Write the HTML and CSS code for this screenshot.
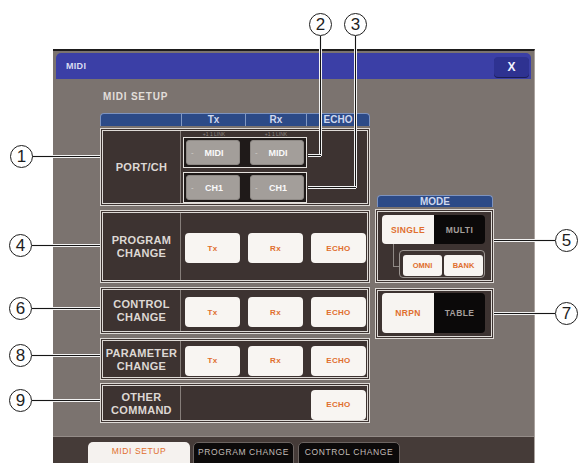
FILE: index.html
```html
<!DOCTYPE html>
<html>
<head>
<meta charset="utf-8">
<link rel="stylesheet" href="styles.css">
</head>
<body>
<div class="page">
  <div class="window">
    <div class="titlebar">
      <span class="title">MIDI</span>
      <div class="close">X</div>
    </div>
    <div class="win-body">
      <div class="section-title">MIDI SETUP</div>
      <div class="main">
        <div class="table">
          <div class="thead">
            <div class="th"></div>
            <div class="th sep">Tx</div>
            <div class="th sep">Rx</div>
            <div class="th sep">ECHO</div>
          </div>
          <div class="row row-port">
            <div class="label">PORT/CH</div>
            <div class="port-content">
              <div class="tiny-row"><span class="tiny">+1 1 LINK</span><span class="tiny">+1 1 LINK</span></div>
              <div class="gbox">
                <div class="gbtn"><span class="dash">-</span><span class="gtxt">MIDI</span></div>
                <div class="gbtn"><span class="dash">-</span><span class="gtxt">MIDI</span></div>
              </div>
              <div class="gbox">
                <div class="gbtn"><span class="dash">-</span><span class="gtxt">CH1</span></div>
                <div class="gbtn"><span class="dash">-</span><span class="gtxt">CH1</span></div>
              </div>
            </div>
          </div>
          <div class="row row-prog">
            <div class="label">PROGRAM<br>CHANGE</div>
            <div class="content">
              <div class="wbtn">Tx</div><div class="wbtn">Rx</div><div class="wbtn">ECHO</div>
            </div>
          </div>
          <div class="row row-ctrl">
            <div class="label">CONTROL<br>CHANGE</div>
            <div class="content">
              <div class="wbtn">Tx</div><div class="wbtn">Rx</div><div class="wbtn">ECHO</div>
            </div>
          </div>
          <div class="row row-param">
            <div class="label">PARAMETER<br>CHANGE</div>
            <div class="content">
              <div class="wbtn">Tx</div><div class="wbtn">Rx</div><div class="wbtn">ECHO</div>
            </div>
          </div>
          <div class="row row-other">
            <div class="label">OTHER<br>COMMAND</div>
            <div class="content content-end">
              <div class="wbtn">ECHO</div>
            </div>
          </div>
        </div>
        <div class="mode">
          <div class="mode-head">MODE</div>
          <div class="mbox mbox-1">
            <div class="toggle">
              <div class="t-on">SINGLE</div>
              <div class="t-off">MULTI</div>
            </div>
            <div class="sub-row">
              <div class="connector"></div>
              <div class="group">
                <div class="sbtn">OMNI</div>
                <div class="sbtn">BANK</div>
              </div>
            </div>
          </div>
          <div class="mbox mbox-2">
            <div class="toggle toggle-tall">
              <div class="t-on">NRPN</div>
              <div class="t-off">TABLE</div>
            </div>
          </div>
        </div>
      </div>
    </div>
    <div class="tabbar">
      <div class="tab tab-active">MIDI SETUP</div>
      <div class="tab tab-prog">PROGRAM CHANGE</div>
      <div class="tab tab-ctrl">CONTROL CHANGE</div>
    </div>
  </div>

  <div class="ln-h ln-1"></div>
  <div class="ln-h ln-4"></div>
  <div class="ln-h ln-6"></div>
  <div class="ln-h ln-8"></div>
  <div class="ln-h ln-9"></div>
  <div class="ln-h ln-5"></div>
  <div class="ln-h ln-7"></div>
  <div class="ln-v ln-2v"></div>
  <div class="ln-h ln-2h"></div>
  <div class="ln-v ln-3v"></div>
  <div class="ln-h ln-3h"></div>

  <div class="co co-1">1</div>
  <div class="co co-2">2</div>
  <div class="co co-3">3</div>
  <div class="co co-4">4</div>
  <div class="co co-5">5</div>
  <div class="co co-6">6</div>
  <div class="co co-7">7</div>
  <div class="co co-8">8</div>
  <div class="co co-9">9</div>
</div>
</body>
</html>
```
FILE: styles.css
```css
* { box-sizing: border-box; }
html, body { margin: 0; padding: 0; background: #fff; }
body { font-family: "Liberation Sans", Arial, sans-serif; }

.page {
  position: relative;
  width: 584px;
  height: 463px;
  overflow: hidden;
  padding: 49px 0 0 53px;
}

.window {
  width: 482px;
  background: #7b736f;
  border-top: 2px solid #1d1b1b;
  border-right: 1px solid #aaa39f;
}

.titlebar {
  margin: 2px 3px 0 3px;
  height: 26px;
  background: #3b3fa6;
  border-radius: 5px 5px 0 0;
  display: flex;
  align-items: center;
  justify-content: space-between;
  padding: 0 2px 0 10px;
}
.title {
  color: #d9dcf2;
  font-size: 9px;
  font-weight: bold;
  letter-spacing: 0.3px;
}
.close {
  width: 35px;
  height: 20px;
  margin-top: 2px;
  background: #2e3291;
  border-radius: 4px;
  box-shadow: 0 1px 0 #1b1d55;
  color: #f2f2ff;
  font-weight: bold;
  font-size: 12px;
  display: flex;
  align-items: center;
  justify-content: center;
}

.win-body {
  height: 357px;
  padding: 12px 0 0 47px;
}
.section-title {
  margin-left: 3px;
  font-size: 10px;
  line-height: 12px;
  height: 12px;
  font-weight: bold;
  color: #e2deda;
  letter-spacing: 0.8px;
}
.main {
  margin-top: 10px;
  display: flex;
  align-items: flex-start;
  gap: 5px;
}

.table { width: 270px; }
.thead {
  height: 13px;
  margin-bottom: 2px;
  background: #2c4a87;
  border: 1px solid #7d93bf;
  border-bottom: none;
  border-radius: 4px 4px 0 0;
  display: grid;
  grid-template-columns: 80px 64px 61px 63px;
}
.th {
  color: #cfd8ef;
  font-size: 10px;
  font-weight: bold;
  line-height: 12px;
  text-align: center;
}
.th.sep { border-left: 1px solid #8299c4; }

.row {
  width: 270px;
  border: 3px double #dedad6;
  background: #3d3331;
  display: flex;
}
.row-port { height: 78px; }
.row-prog { height: 73px; margin-top: 4px; }
.row-ctrl { height: 47px; margin-top: 4px; }
.row-param { height: 42px; margin-top: 4px; }
.row-other { height: 40px; margin-top: 3px; }

.label {
  width: 78px;
  border-right: 1px solid #867e7a;
  display: flex;
  align-items: center;
  justify-content: center;
  text-align: center;
  color: #ddd8d4;
  font-size: 11px;
  font-weight: bold;
  line-height: 13px;
  letter-spacing: 0.3px;
  padding-top: 1px;
}
.content {
  flex: 1;
  display: flex;
  align-items: center;
  gap: 8px;
  padding: 3px 0 0 4px;
}
.content-end { justify-content: flex-end; padding-right: 1px; }

.wbtn {
  width: 55px;
  height: 30px;
  background: #f8f5f2;
  border-radius: 4px;
  color: #e06f2e;
  font-size: 8px;
  font-weight: bold;
  letter-spacing: 0.3px;
  display: flex;
  align-items: center;
  justify-content: center;
}

.port-content {
  flex: 1;
  display: flex;
  flex-direction: column;
  padding: 0 0 0 2px;
}
.tiny-row {
  height: 6px;
  width: 124px;
  display: flex;
}
.tiny {
  flex: 1;
  text-align: center;
  font-size: 5px;
  line-height: 6px;
  color: #8d8581;
}
.gbox {
  width: 124px;
  height: 31px;
  border: 1px solid #e4e0dc;
  background: #1f1a19;
  padding: 2px;
  display: flex;
  gap: 10px;
}
.gbox + .gbox { margin-top: 4px; }
.gbtn {
  width: 54px;
  background: #a39e9a;
  border-radius: 3px;
  border: 1px solid #8f8a86;
  display: flex;
  align-items: center;
  padding-left: 4px;
}
.dash {
  width: 6px;
  color: #d6d2ce;
  font-size: 8px;
}
.gtxt {
  flex: 1;
  text-align: center;
  padding-right: 8px;
  color: #fafafa;
  font-size: 9px;
  font-weight: bold;
}

.mode {
  width: 119px;
  margin-top: 82px;
}
.mode-head {
  margin: 0 1px 0 2px;
  height: 12px;
  background: #2c4a87;
  border: 1px solid #7d93bf;
  border-bottom: none;
  border-radius: 4px 4px 0 0;
  color: #cfd8ef;
  font-size: 10px;
  font-weight: bold;
  line-height: 11px;
  text-align: center;
}
.mbox {
  border: 3px double #dedad6;
  background: #3d3331;
  padding: 3px 0 0 4px;
}
.mbox-1 { height: 74px; margin-top: 2px; }
.mbox-2 { height: 51px; margin-top: 5px; padding-top: 2px; }

.toggle {
  width: 103px;
  height: 29px;
  display: flex;
  border-radius: 4px;
  overflow: hidden;
  font-size: 8.5px;
  font-weight: bold;
  letter-spacing: 0.4px;
}
.toggle-tall { height: 40px; }
.t-on {
  width: 52px;
  background: #f7f4f1;
  color: #e06f2e;
  display: flex;
  align-items: center;
  justify-content: center;
}
.t-off {
  flex: 1;
  background: #0b0909;
  color: #a59f9b;
  display: flex;
  align-items: center;
  justify-content: center;
}
.sub-row {
  display: flex;
  align-items: flex-start;
  margin-top: 6px;
  padding-left: 11px;
}
.connector {
  width: 6px;
  height: 23px;
  margin-top: -6px;
  border-left: 1px solid #8e8884;
  border-bottom: 1px solid #8e8884;
}
.group {
  width: 86px;
  height: 28px;
  border: 1px solid #9b9591;
  border-radius: 4px;
  padding: 4px 1px 1px 3px;
  display: flex;
  gap: 2px;
}
.sbtn {
  width: 39px;
  height: 21px;
  background: #f8f5f2;
  border-radius: 3px;
  color: #e06f2e;
  font-size: 7.5px;
  font-weight: bold;
  display: flex;
  align-items: center;
  justify-content: center;
}

.tabbar {
  height: 27px;
  background: #453b38;
  border-top: 1px solid #948c88;
  padding: 5px 0 0 35px;
  display: flex;
}
.tab {
  height: 26px;
  border-radius: 5px;
  font-size: 8.5px;
  line-height: 19px;
  text-align: center;
  letter-spacing: 0.6px;
}
.tab-active {
  width: 102px;
  background: #f5f2ef;
  color: #e06f2e;
}
.tab-prog {
  width: 101px;
  margin-left: 3px;
  background: #0c0a0a;
  border: 1px solid #6c6461;
  color: #c3bdb9;
}
.tab-ctrl {
  width: 102px;
  margin-left: 4px;
  background: #0c0a0a;
  border: 1px solid #6c6461;
  color: #c3bdb9;
}

/* callouts */
.co {
  position: absolute;
  width: 23px;
  height: 23px;
  border: 1px solid #1e1e1e;
  border-radius: 50%;
  background: #fff;
  color: #1e1e1e;
  font-size: 17px;
  line-height: 21px;
  text-align: center;
}
.co-1 { left: 10px; top: 145px; }
.co-2 { left: 309px; top: 13px; }
.co-3 { left: 344px; top: 13px; }
.co-4 { left: 9px; top: 234px; }
.co-5 { left: 555px; top: 229px; }
.co-6 { left: 9px; top: 297px; }
.co-7 { left: 555px; top: 302px; }
.co-8 { left: 9px; top: 344px; }
.co-9 { left: 9px; top: 389px; }

.ln-h {
  position: absolute;
  height: 1px;
  background: #161616;
  box-shadow: 0 1px 0 #f2f2f2, 0 -1px 0 #f2f2f2;
}
.ln-v {
  position: absolute;
  width: 1px;
  background: #161616;
  box-shadow: 1px 0 0 #f2f2f2, -1px 0 0 #f2f2f2;
}
.ln-1 { left: 32px; width: 68px; top: 156px; }
.ln-4 { left: 32px; width: 68px; top: 245px; }
.ln-6 { left: 32px; width: 68px; top: 308px; }
.ln-8 { left: 32px; width: 68px; top: 355px; }
.ln-9 { left: 32px; width: 68px; top: 400px; }
.ln-5 { left: 494px; width: 61px; top: 240px; }
.ln-7 { left: 494px; width: 61px; top: 313px; }
.ln-2v { left: 320px; top: 36px; height: 120px; }
.ln-2h { left: 308px; width: 13px; top: 155px; }
.ln-3v { left: 355px; top: 36px; height: 152px; }
.ln-3h { left: 308px; width: 48px; top: 187px; }
```
